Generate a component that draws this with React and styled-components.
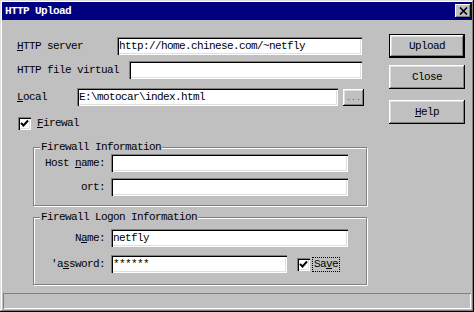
import React from "react";
import styled, { createGlobalStyle } from "styled-components";

const GlobalStyle = createGlobalStyle`
  body {
    margin: 0;
    background: #c0c0c0;
  }
  * {
    box-sizing: border-box;
  }
`;

const Window = styled.div`
  width: 474px;
  height: 312px;
  padding: 2px;
  display: flex;
  flex-direction: column;
  background: #c0c0c0;
  box-shadow: inset -1px -1px #000, inset 1px 1px #dfdfdf, inset -2px -2px #808080,
    inset 2px 2px #fff;
  font-family: "Liberation Mono", "Courier New", monospace;
  font-size: 11px;
  letter-spacing: -0.6px;
  color: #000;
`;

const TitleBar = styled.div`
  height: 18px;
  padding: 0 1px 0 3px;
  display: flex;
  align-items: center;
  justify-content: space-between;
  background: #000080;
  color: #fff;
  font-weight: bold;
`;

const CloseBox = styled.div`
  width: 16px;
  height: 14px;
  display: flex;
  align-items: center;
  justify-content: center;
  background: #c0c0c0;
  box-shadow: inset -1px -1px #000, inset 1px 1px #fff, inset -2px -2px #808080;
`;

const Body = styled.div`
  flex: 1;
  display: flex;
  padding: 14px 0 0 15px;
`;

const FormColumn = styled.div`
  width: 352px;
  padding-top: 3px;
  display: flex;
  flex-direction: column;
`;

const ButtonColumn = styled.div`
  margin-left: 20px;
  display: flex;
  flex-direction: column;
`;

const Row = styled.div`
  display: flex;
  align-items: center;
  height: ${(p) => p.$h || 18}px;
  margin-top: ${(p) => p.$mt || 0}px;
`;

const Label = styled.span`
  width: ${(p) => p.$w}px;
  flex-shrink: 0;
  white-space: pre;
  text-align: ${(p) => (p.$right ? "right" : "left")};
  padding-right: ${(p) => (p.$right ? 6 : 0)}px;
`;

const Acc = styled.u`
  text-decoration: underline;
`;

const Field = styled.div`
  width: ${(p) => p.$w}px;
  height: 18px;
  padding: 3px 3px 0 2px;
  background: #fff;
  white-space: pre;
  overflow: hidden;
  box-shadow: inset 1px 1px #808080, inset 2px 2px #000, inset -1px -1px #fff,
    inset -2px -2px #dfdfdf;
`;

const SmallButton = styled.div`
  width: 21px;
  height: 17px;
  margin-left: 5px;
  display: flex;
  align-items: center;
  justify-content: center;
  font-size: 8px;
  letter-spacing: 0;
  color: #555;
  box-shadow: inset -1px -1px #000, inset 1px 1px #fff, inset -2px -2px #808080,
    inset 2px 2px #dfdfdf;
`;

const Button = styled.div`
  width: 76px;
  height: 24px;
  margin-top: ${(p) => p.$mt || 0}px;
  display: flex;
  align-items: center;
  justify-content: center;
  border: ${(p) => (p.$default ? "1px solid #000" : "none")};
  box-shadow: inset -1px -1px #000, inset 1px 1px #fff, inset -2px -2px #808080,
    inset 2px 2px #dfdfdf;
`;

const Box = styled.div`
  width: 13px;
  height: 13px;
  flex-shrink: 0;
  margin-left: ${(p) => p.$ml || 0}px;
  display: flex;
  align-items: center;
  justify-content: center;
  background: #fff;
  box-shadow: inset 1px 1px #808080, inset 2px 2px #000, inset -1px -1px #fff,
    inset -2px -2px #dfdfdf;
`;

const CheckText = styled.span`
  margin-left: ${(p) => p.$ml || 5}px;
  padding: 0 1px;
  line-height: 13px;
  outline: ${(p) => (p.$focus ? "1px dotted #000" : "none")};
`;

const Group = styled.fieldset`
  width: 334px;
  margin: ${(p) => p.$mt}px 0 0 16px;
  padding: ${(p) => p.$pt}px 0 ${(p) => p.$pb}px 10px;
  border: 1px solid #808080;
  box-shadow: inset 1px 1px #fff, 1px 1px #fff;
  min-width: 0;
`;

const Legend = styled.legend`
  margin-left: -4px;
  padding: 0 1px;
  line-height: 12px;
  background: #c0c0c0;
`;

const StatusBar = styled.div`
  height: 16px;
  margin: 0 1px 1px 1px;
  box-shadow: inset 1px 1px #808080, inset -1px -1px #fff;
`;

const Check = () => (
  <svg width="9" height="9" viewBox="0 0 9 9">
    <polyline points="1,4 3.5,6.5 8,1.5" fill="none" stroke="#000" strokeWidth="2" />
  </svg>
);

export default function App() {
  return (
    <>
      <GlobalStyle />
      <Window>
        <TitleBar>
          <span>HTTP Upload</span>
          <CloseBox>
            <svg width="9" height="8" viewBox="0 0 9 8">
              <path d="M1 0.5 L8 7.5 M8 0.5 L1 7.5" stroke="#000" strokeWidth="1.6" />
            </svg>
          </CloseBox>
        </TitleBar>
        <Body>
          <FormColumn>
            <Row>
              <Label $w={100}>
                <Acc>H</Acc>TTP server
              </Label>
              <Field $w={245}>http://home.chinese.com/~netfly</Field>
            </Row>
            <Row $mt={6}>
              <Label $w={112}>HTTP file virtual</Label>
              <Field $w={233} />
            </Row>
            <Row $mt={9}>
              <Label $w={60}>
                <Acc>L</Acc>ocal
              </Label>
              <Field $w={261}>E:\motocar\index.html</Field>
              <SmallButton>...</SmallButton>
            </Row>
            <Row $mt={11} $h={13}>
              <Box $ml={1}>
                <Check />
              </Box>
              <CheckText>
                <Acc>F</Acc>irewal
              </CheckText>
            </Row>
            <Group $mt={11} $pt={1} $pb={9}>
              <Legend>Firewall Information</Legend>
              <Row>
                <Label $w={67} $right>
                  Host <Acc>n</Acc>ame:
                </Label>
                <Field $w={237} />
              </Row>
              <Row $mt={6}>
                <Label $w={67} $right>
                  ort:
                </Label>
                <Field $w={237} />
              </Row>
            </Group>
            <Group $mt={5} $pt={6} $pb={11}>
              <Legend>Firewall Logon Information</Legend>
              <Row>
                <Label $w={67} $right>
                  N<Acc>a</Acc>me:
                </Label>
                <Field $w={237}>netfly</Field>
              </Row>
              <Row $mt={8}>
                <Label $w={67} $right>
                  'a<Acc>s</Acc>sword:
                </Label>
                <Field $w={176}>******</Field>
                <Box $ml={10}>
                  <Check />
                </Box>
                <CheckText $ml={3} $focus>
                  Sa<Acc>v</Acc>e
                </CheckText>
              </Row>
            </Group>
          </FormColumn>
          <ButtonColumn>
            <Button $default>Upload</Button>
            <Button $mt={7}>Close</Button>
            <Button $mt={11}>
              <span>
                <Acc>H</Acc>elp
              </span>
            </Button>
          </ButtonColumn>
        </Body>
        <StatusBar />
      </Window>
    </>
  );
}
